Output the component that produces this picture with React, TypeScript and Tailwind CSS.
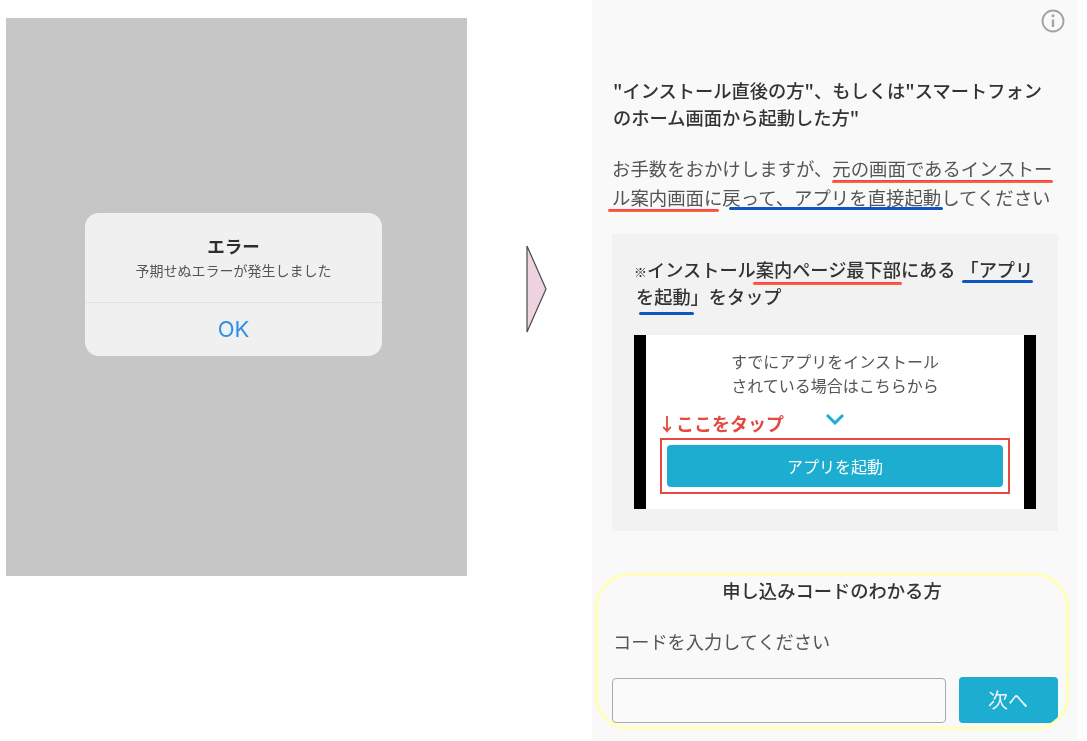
import React from 'react'

const font = { fontFamily: '"Noto Sans CJK JP", "Noto Sans", sans-serif' }

const red = 'absolute h-[3px] rounded-full bg-linear-to-b from-[#ff2a5a] to-[#f5761f]'
const blue = 'absolute h-[3px] rounded-full bg-[#0f55c4]'

function ErrorShot() {
  return (
    <div className="w-[461px] h-[558px] mt-[18px] ml-[6px] bg-[#c6c6c6] pt-[195px] pl-[79px] shrink-0">
      <div className="w-[297px] h-[143px] bg-[#f0f0f0] rounded-[14px] flex flex-col">
        <div className="h-[90px] border-b border-[#e2e2e2] flex flex-col items-center pt-[21px]">
          <div className="text-[17.5px] leading-[24px] font-bold text-[#2e2e2e]">エラー</div>
          <div className="mt-[2px] text-[14px] leading-[20px] text-[#555]">予期せぬエラーが発生しました</div>
        </div>
        <div className="flex-1 flex items-center justify-center text-[22px] text-[#2f8fe6]" style={{ fontFamily: 'Inter, sans-serif' }}>OK</div>
      </div>
    </div>
  )
}

function Arrow() {
  return (
    <div className="w-[125px] shrink-0 pt-[245px] pl-[59px]">
      <svg width="22" height="88" viewBox="0 0 22 88">
        <path d="M1 1 L20 44 L1 87 Z" fill="#ecd3de" stroke="#4a4a4a" strokeWidth="1.2" />
      </svg>
    </div>
  )
}

function Guide() {
  return (
    <div className="mx-[20px] mt-[22px] w-[446px] h-[297px] bg-[#f2f2f2] px-[22px] pt-[21px]">
      <div className="text-[18.2px] leading-[28px] font-medium text-[#333] whitespace-nowrap">
        <div className="h-[27px]"><span className="text-[13px] leading-[13px] font-bold">※</span>インストール案内ページ最下部にある<span className="ml-[5px]">「アプリ</span></div>
        <div className="h-[28px] ml-[2px]">を起動」をタップ</div>
      </div>
      <div className="mt-[25px] h-[174px] bg-white border-x-[12px] border-black flex flex-col items-center relative">
        <div className="pt-[14px] text-[16px] leading-[24px] text-[#555] text-center">
          <div>すでにアプリをインストール</div>
          <div>されている場合はこちらから</div>
        </div>
        <div className="w-full flex items-center h-[24px] mt-[14px] pl-[12px] relative">
          <span className="text-[18px] font-bold text-[#e5493f] whitespace-nowrap">↓ここをタップ</span>
          <svg className="absolute left-[179px] top-[2px]" width="20" height="12" viewBox="0 0 20 12">
            <path d="M2 2 L10 10 L18 2" fill="none" stroke="#1cadd0" strokeWidth="3" />
          </svg>
        </div>
        <div className="mt-[3px] w-[350px] h-[56px] border-[2.5px] border-[#e5493f] p-[5px]">
          <div className="h-full bg-[#1cadd0] rounded-[4px] flex items-center justify-center text-white text-[16px]">アプリを起動</div>
        </div>
      </div>
    </div>
  )
}

function CodeForm() {
  return (
    <div className="mt-[42px] ml-[3px] mr-[8px] h-[157px] border-[3.5px] border-[#ffffb8] rounded-[34px] overflow-hidden">
      <div className="text-center text-[18.3px] leading-[28px] font-medium text-[#333]">申し込みコードのわかる方</div>
      <div className="mt-[23px] pl-[15px] text-[18.2px] leading-[28px] text-[#555]">コードを入力してください</div>
      <div className="mt-[21.5px] pl-[13.5px] flex items-start gap-[13px]">
        <input className="w-[334px] h-[45px] mt-[1px] border border-[#aaa] rounded-[4px] bg-[#fafafa]" />
        <button className="w-[99px] h-[46px] bg-[#1cadd0] rounded-[4px] text-[20px] text-[#e8f6fa]">次へ</button>
      </div>
    </div>
  )
}

export default function App() {
  return (
    <div className="w-[1087px] h-[741px] bg-[#fefefe] flex overflow-hidden blur-[0.4px]" style={font}>
      <ErrorShot />
      <Arrow />
      <div className="w-[485px] h-[741px] bg-[#f9f9f9] shrink-0 flex flex-col relative">
        <div className="flex justify-end pt-[9px] pr-[12px] h-[77px]">
          <svg width="24" height="24" viewBox="0 0 24 24" fill="none" stroke="#a3a3a3">
            <circle cx="12" cy="12" r="10.5" strokeWidth="1.9" />
            <path d="M12 10.5 V18" strokeWidth="2.4" />
            <circle cx="12" cy="6.8" r="1.5" fill="#a3a3a3" stroke="none" />
          </svg>
        </div>
        <div className="pl-[21px] text-[18.25px] leading-[27px] font-medium text-[#333] whitespace-nowrap">
          <div>"インストール直後の方"、もしくは"スマートフォン</div>
          <div>のホーム画面から起動した方"</div>
        </div>
        <div className="pl-[20px] mt-[23px] text-[18.4px] leading-[29px] text-[#555] whitespace-nowrap">
          <div>お手数をおかけしますが、元の画面であるインストー</div>
          <div>ル案内画面に戻って、アプリを直接起動してください</div>
        </div>
        <Guide />
        <CodeForm />

        {/* hand drawn marker lines over the text */}
        <span className={`${red} left-[240px] top-[180px] w-[221px]`} />
        <span className={`${red} left-[16px] top-[209px] w-[111px]`} />
        <span className={`${blue} left-[137px] top-[207px] w-[214px]`} />
        <span className={`${red} left-[161px] top-[282px] w-[149px]`} />
        <span className={`${blue} left-[370px] top-[280px] w-[71px]`} />
        <span className={`${blue} left-[47px] top-[312px] w-[55px]`} />
      </div>
    </div>
  )
}
